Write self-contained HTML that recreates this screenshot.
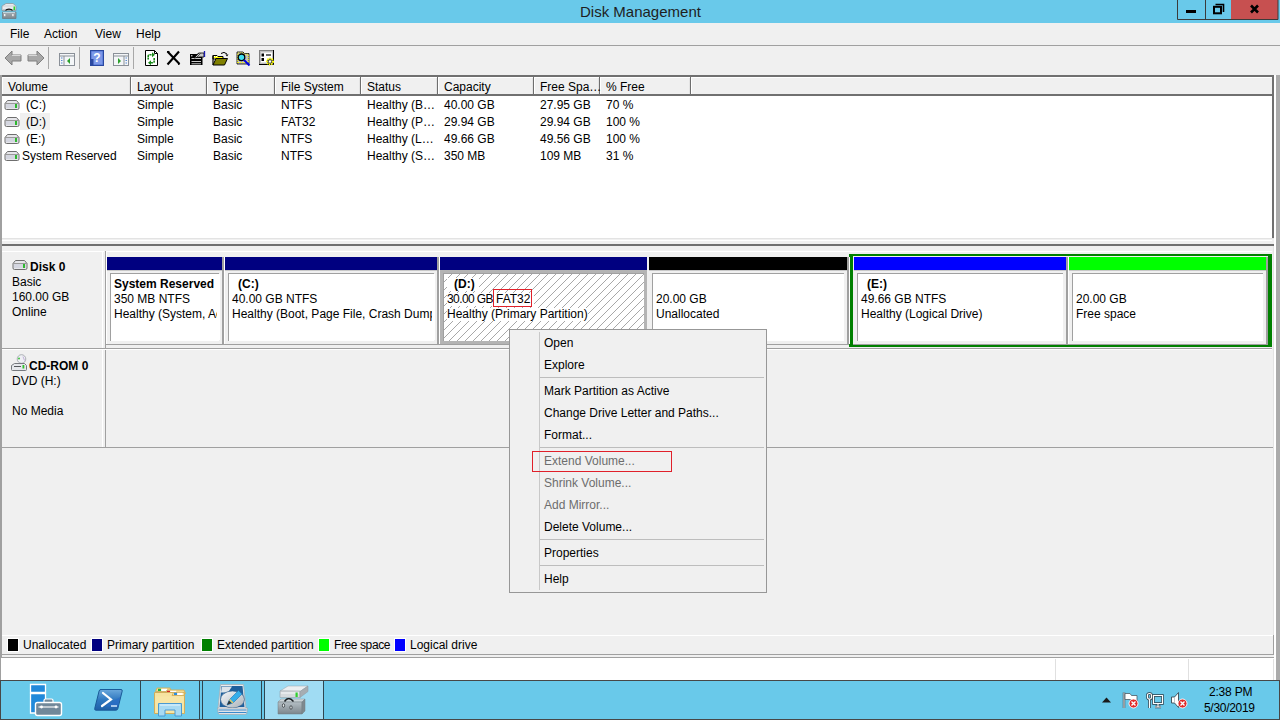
<!DOCTYPE html>
<html><head><meta charset="utf-8">
<style>
*{margin:0;padding:0;box-sizing:border-box}
html,body{width:1280px;height:720px;overflow:hidden;background:#F0F0F0;font-family:"Liberation Sans",sans-serif;font-size:12px;color:#000}
.a{position:absolute}
.t{position:absolute;white-space:nowrap;line-height:14px}
.b{font-weight:bold}
#title{left:0;top:0;width:1280px;height:23px;background:#69C9EA}
#menubar{left:0;top:23px;width:1280px;height:22px;background:#F0F0F0}
#tb{left:0;top:45px;width:1280px;height:30px;background:#F0F0F0;border-top:1px solid #A0A0A0}
.hdr{top:78px;height:16px;background:#F0F0F0}
.hsep{top:78px;width:2px;height:17px;border-left:1px solid #A0A0A0;border-right:1px solid #fff}
.blk{position:absolute;top:257px;height:87px;background:#F0F0F0}
.bar{position:absolute;left:0;top:0;right:0;height:13px}
.bsep{position:absolute;left:0;top:13px;right:0;height:1px;background:#C8C8C8}
.box{position:absolute;left:3px;top:16px;right:3px;height:68px;background:#fff;border-top:1px solid #A0A0A0;border-left:1px solid #A0A0A0}
.vs{position:absolute;top:257px;height:87px;width:3px;border-left:2px solid #A0A0A0;border-right:1px solid #fff}
.mi{position:absolute;left:544px;white-space:nowrap;line-height:14px}
.dis{color:#6D6D6D}
.msep{position:absolute;left:540px;width:224px;height:1px;background:#BDBDBD}
</style></head><body>

<!-- title bar -->
<div id="title" class="a"></div>
<div class="t" style="left:580px;top:3px;font-size:15px;line-height:17px;color:#1E1E1E">Disk Management</div>
<!-- window buttons -->
<div class="a" style="left:1231px;top:0;width:47px;height:19px;background:#C75050"></div>
<svg class="a" style="left:1177px;top:0" width="103" height="21" viewBox="0 0 103 21">
<path d="M0.5 0v19.5h100.5v-19.5M28.5 0v19.5" fill="none" stroke="#3B3B3B" stroke-width="1"/>
<rect x="9" y="10" width="10" height="3" fill="#000"/>
<path d="M38.5 4.5h8v7.5" fill="none" stroke="#000" stroke-width="1.6"/>
<rect x="37" y="6.8" width="7" height="6.5" fill="none" stroke="#000" stroke-width="2"/>
<path d="M74 5.5l7 7M81 5.5l-7 7" stroke="#000" stroke-width="2.6"/>
</svg>
<!-- menu -->
<div id="menubar" class="a"></div>
<div class="t" style="left:10px;top:27px">File</div>
<div class="t" style="left:44px;top:27px">Action</div>
<div class="t" style="left:95px;top:27px">View</div>
<div class="t" style="left:136px;top:27px">Help</div>

<!-- toolbar -->
<div id="tb" class="a"></div>

<!-- right gray strip -->
<div class="a" style="left:1276px;top:75px;width:4px;height:605px;background:#ABABAB"></div>
<!-- left border -->
<div class="a" style="left:0;top:75px;width:2px;height:605px;background:#A0A0A0"></div>

<!-- list view -->
<div class="a" style="left:2px;top:75px;width:1272px;height:2px;background:#707070"></div>
<div class="a" style="left:2px;top:77px;width:1272px;height:161px;background:#fff"></div>
<div class="a hdr" style="left:3px;width:1270px"></div>
<div class="a" style="left:2px;top:94px;width:1272px;height:2px;background:#707070"></div>
<div class="a" style="left:1272px;top:75px;width:2px;height:163px;background:#707070"></div>
<div class="a" style="left:2px;top:238px;width:1272px;height:1px;background:#E3E3E3"></div>
<div class="a" style="left:2px;top:244px;width:1272px;height:2px;background:#707070"></div>

<div class="a" style="left:2px;top:77px;width:1px;height:17px;background:#fff"></div>
<div class="a" style="left:131px;top:77px;width:1px;height:17px;background:#fff"></div>
<div class="a" style="left:207px;top:77px;width:1px;height:17px;background:#fff"></div>
<div class="a" style="left:275px;top:77px;width:1px;height:17px;background:#fff"></div>
<div class="a" style="left:361px;top:77px;width:1px;height:17px;background:#fff"></div>
<div class="a" style="left:438px;top:77px;width:1px;height:17px;background:#fff"></div>
<div class="a" style="left:534px;top:77px;width:1px;height:17px;background:#fff"></div>
<div class="a" style="left:600px;top:77px;width:1px;height:17px;background:#fff"></div>
<div class="a" style="left:691px;top:77px;width:1px;height:17px;background:#fff"></div>
<div class="a" style="left:129px;top:78px;width:1px;height:16px;background:#E3E3E3"></div>
<div class="a" style="left:130px;top:77px;width:1px;height:17px;background:#6E6E6E"></div>
<div class="a" style="left:205px;top:78px;width:1px;height:16px;background:#E3E3E3"></div>
<div class="a" style="left:206px;top:77px;width:1px;height:17px;background:#6E6E6E"></div>
<div class="a" style="left:273px;top:78px;width:1px;height:16px;background:#E3E3E3"></div>
<div class="a" style="left:274px;top:77px;width:1px;height:17px;background:#6E6E6E"></div>
<div class="a" style="left:359px;top:78px;width:1px;height:16px;background:#E3E3E3"></div>
<div class="a" style="left:360px;top:77px;width:1px;height:17px;background:#6E6E6E"></div>
<div class="a" style="left:436px;top:78px;width:1px;height:16px;background:#E3E3E3"></div>
<div class="a" style="left:437px;top:77px;width:1px;height:17px;background:#6E6E6E"></div>
<div class="a" style="left:532px;top:78px;width:1px;height:16px;background:#E3E3E3"></div>
<div class="a" style="left:533px;top:77px;width:1px;height:17px;background:#6E6E6E"></div>
<div class="a" style="left:598px;top:78px;width:1px;height:16px;background:#E3E3E3"></div>
<div class="a" style="left:599px;top:77px;width:1px;height:17px;background:#6E6E6E"></div>
<div class="a" style="left:689px;top:78px;width:1px;height:16px;background:#E3E3E3"></div>
<div class="a" style="left:690px;top:77px;width:1px;height:17px;background:#6E6E6E"></div>
<div class="t" style="left:8px;top:80px">Volume</div>
<div class="t" style="left:137px;top:80px">Layout</div>
<div class="t" style="left:213px;top:80px">Type</div>
<div class="t" style="left:281px;top:80px">File System</div>
<div class="t" style="left:367px;top:80px">Status</div>
<div class="t" style="left:444px;top:80px">Capacity</div>
<div class="t" style="left:540px;top:80px">Free Spa&hellip;</div>
<div class="t" style="left:606px;top:80px">% Free</div>
<svg class="a" style="left:4px;top:100px" width="16" height="10" viewBox="0 0 16 10"><path d="M3.5 0.5h9l2.5 3v4.5a1.5 1.5 0 0 1-1.5 1.5h-11a1.5 1.5 0 0 1-1.5-1.5v-4.5z" fill="#E6E6EA" stroke="#6E6E6E"/><path d="M1 3.5h14" stroke="#9A9A9A"/><rect x="2" y="4" width="12" height="4" fill="#D4D6E0"/><rect x="11" y="4" width="2" height="4" fill="#2EB82E"/></svg>
<div class="t" style="left:26px;top:98px">(C:)</div>
<div class="t" style="left:137px;top:98px">Simple</div>
<div class="t" style="left:213px;top:98px">Basic</div>
<div class="t" style="left:281px;top:98px">NTFS</div>
<div class="t" style="left:367px;top:98px">Healthy (B&hellip;</div>
<div class="t" style="left:444px;top:98px">40.00 GB</div>
<div class="t" style="left:540px;top:98px">27.95 GB</div>
<div class="t" style="left:606px;top:98px">70 %</div>
<svg class="a" style="left:4px;top:117px" width="16" height="10" viewBox="0 0 16 10"><path d="M3.5 0.5h9l2.5 3v4.5a1.5 1.5 0 0 1-1.5 1.5h-11a1.5 1.5 0 0 1-1.5-1.5v-4.5z" fill="#E6E6EA" stroke="#6E6E6E"/><path d="M1 3.5h14" stroke="#9A9A9A"/><rect x="2" y="4" width="12" height="4" fill="#D4D6E0"/><rect x="11" y="4" width="2" height="4" fill="#2EB82E"/></svg>
<div class="a" style="left:20px;top:113px;width:30px;height:17px;background:#F0F0F0"></div>
<div class="t" style="left:26px;top:115px">(D:)</div>
<div class="t" style="left:137px;top:115px">Simple</div>
<div class="t" style="left:213px;top:115px">Basic</div>
<div class="t" style="left:281px;top:115px">FAT32</div>
<div class="t" style="left:367px;top:115px">Healthy (P&hellip;</div>
<div class="t" style="left:444px;top:115px">29.94 GB</div>
<div class="t" style="left:540px;top:115px">29.94 GB</div>
<div class="t" style="left:606px;top:115px">100 %</div>
<svg class="a" style="left:4px;top:134px" width="16" height="10" viewBox="0 0 16 10"><path d="M3.5 0.5h9l2.5 3v4.5a1.5 1.5 0 0 1-1.5 1.5h-11a1.5 1.5 0 0 1-1.5-1.5v-4.5z" fill="#E6E6EA" stroke="#6E6E6E"/><path d="M1 3.5h14" stroke="#9A9A9A"/><rect x="2" y="4" width="12" height="4" fill="#D4D6E0"/><rect x="11" y="4" width="2" height="4" fill="#2EB82E"/></svg>
<div class="t" style="left:26px;top:132px">(E:)</div>
<div class="t" style="left:137px;top:132px">Simple</div>
<div class="t" style="left:213px;top:132px">Basic</div>
<div class="t" style="left:281px;top:132px">NTFS</div>
<div class="t" style="left:367px;top:132px">Healthy (L&hellip;</div>
<div class="t" style="left:444px;top:132px">49.66 GB</div>
<div class="t" style="left:540px;top:132px">49.56 GB</div>
<div class="t" style="left:606px;top:132px">100 %</div>
<svg class="a" style="left:4px;top:151px" width="16" height="10" viewBox="0 0 16 10"><path d="M3.5 0.5h9l2.5 3v4.5a1.5 1.5 0 0 1-1.5 1.5h-11a1.5 1.5 0 0 1-1.5-1.5v-4.5z" fill="#E6E6EA" stroke="#6E6E6E"/><path d="M1 3.5h14" stroke="#9A9A9A"/><rect x="2" y="4" width="12" height="4" fill="#D4D6E0"/><rect x="11" y="4" width="2" height="4" fill="#2EB82E"/></svg>
<div class="t" style="left:22px;top:149px">System Reserved</div>
<div class="t" style="left:137px;top:149px">Simple</div>
<div class="t" style="left:213px;top:149px">Basic</div>
<div class="t" style="left:281px;top:149px">NTFS</div>
<div class="t" style="left:367px;top:149px">Healthy (S&hellip;</div>
<div class="t" style="left:444px;top:149px">350 MB</div>
<div class="t" style="left:540px;top:149px">109 MB</div>
<div class="t" style="left:606px;top:149px">31 %</div>
<div class="a" style="left:2px;top:240px;width:1270px;height:1px;background:#fff"></div>
<div class="a" style="left:2px;top:251px;width:102px;height:1px;background:#fff"></div>
<div class="a" style="left:102px;top:252px;width:1px;height:96px;background:#fff"></div>
<div class="a" style="left:105px;top:251px;width:1px;height:197px;background:#A0A0A0"></div>
<div class="a" style="left:2px;top:348px;width:1270px;height:1px;background:#A0A0A0"></div>
<div class="a" style="left:2px;top:349px;width:1270px;height:1px;background:#fff"></div>
<div class="a" style="left:105px;top:344px;width:1167px;height:1px;background:#A0A0A0"></div>
<div class="a" style="left:106px;top:251px;width:1166px;height:1px;background:#fff"></div>
<div class="a" style="left:106px;top:252px;width:1px;height:92px;background:#fff"></div>
<div class="a" style="left:2px;top:447px;width:1272px;height:1px;background:#A0A0A0"></div>
<div class="a" style="left:102px;top:350px;width:1px;height:97px;background:#fff"></div>
<svg class="a" style="left:12px;top:260px" width="16" height="10" viewBox="0 0 16 10"><path d="M3.5 0.5h9l2.5 3v4.5a1.5 1.5 0 0 1-1.5 1.5h-11a1.5 1.5 0 0 1-1.5-1.5v-4.5z" fill="#E6E6EA" stroke="#6E6E6E"/><path d="M1 3.5h14" stroke="#9A9A9A"/><rect x="2" y="4" width="12" height="4" fill="#D4D6E0"/><rect x="11" y="4" width="2" height="4" fill="#2EB82E"/></svg>
<div class="t b" style="left:30px;top:260px">Disk 0</div>
<div class="t" style="left:12px;top:275px">Basic</div>
<div class="t" style="left:12px;top:290px">160.00 GB</div>
<div class="t" style="left:12px;top:305px">Online</div>
<svg class="a" style="left:11px;top:354px" width="17" height="17" viewBox="0 0 17 17"><circle cx="10.5" cy="5" r="4.3" fill="#EEF0F4" stroke="#9A9EA6" stroke-width="0.8"/><circle cx="8" cy="4.5" r="1" fill="#3EC23E"/><path d="M12 2.5l1.5 4" stroke="#B8A0D0" stroke-width="0.8"/><path d="M3.5 9.5h10l2 2v4a1 1 0 0 1-1 1h-13a1 1 0 0 1-1-1v-4z" fill="#E6E8EC" stroke="#76797E"/><path d="M3 12.5h7" stroke="#55585C" stroke-width="1"/><rect x="11.5" y="11" width="1.8" height="3.5" fill="#2EC22E"/></svg>
<div class="t b" style="left:29px;top:359px">CD-ROM 0</div>
<div class="t" style="left:12px;top:374px">DVD (H:)</div>
<div class="t" style="left:12px;top:404px">No Media</div>
<div class="a" style="left:107px;top:257px;width:115px;height:13px;background:#000080"></div>
<div class="a" style="left:107px;top:270px;width:115px;height:1px;background:#C8C8C8"></div>
<div class="a" style="left:110px;top:273px;width:109px;height:68px;background:#fff;border-top:1px solid #A0A0A0;border-left:1px solid #A0A0A0;overflow:hidden">
<div class="t b" style="left:3px;top:3px">System Reserved</div>
<div class="t" style="left:3px;top:18px">350 MB NTFS</div>
<div class="t" style="left:3px;top:33px">Healthy (System, Active, Primary Partition)</div>
</div>
<div class="a" style="left:225px;top:257px;width:212px;height:13px;background:#000080"></div>
<div class="a" style="left:225px;top:270px;width:212px;height:1px;background:#C8C8C8"></div>
<div class="a" style="left:228px;top:273px;width:206px;height:68px;background:#fff;border-top:1px solid #A0A0A0;border-left:1px solid #A0A0A0;overflow:hidden">
<div class="t b" style="left:9px;top:3px">(C:)</div>
<div class="t" style="left:3px;top:18px">40.00 GB NTFS</div>
<div class="t" style="left:3px;top:33px">Healthy (Boot, Page File, Crash Dump, Primary Partition)</div>
</div>
<div class="a" style="left:440px;top:257px;width:207px;height:13px;background:#000080"></div>
<div class="a" style="left:440px;top:270px;width:207px;height:1px;background:#C8C8C8"></div>
<div class="a" style="left:440px;top:270px;width:207px;height:74px;background:#B4B4B4"></div>
<div class="a" style="left:443px;top:273px;width:201px;height:68px;background:#fff;border-top:1px solid #A0A0A0;border-left:1px solid #A0A0A0;overflow:hidden"><svg class="a" style="left:0;top:0" width="210" height="70"><defs><pattern id="hp" patternUnits="userSpaceOnUse" width="8" height="8"><path d="M0 8L8 0M-1 1L1 -1M7 9L9 7" stroke="#A8A8A8" stroke-width="1"/></pattern></defs><rect width="210" height="70" fill="url(#hp)"/></svg>
<div class="t b" style="left:3px;top:4px;line-height:13px;padding:0 4px 0 7px;background:#fff">(D:)</div>
<div class="t" style="left:3px;top:19px;line-height:13px;width:87px;background:#fff"><span style="letter-spacing:-0.6px">30.00 GB</span></div><div class="t" style="left:52px;top:19px;line-height:13px">FAT32</div>
<div class="t" style="left:3px;top:34px;line-height:13px;background:#fff">Healthy (Primary Partition)</div>
</div>
<div class="a" style="left:649px;top:257px;width:198px;height:13px;background:#000000"></div>
<div class="a" style="left:649px;top:270px;width:198px;height:1px;background:#C8C8C8"></div>
<div class="a" style="left:652px;top:273px;width:192px;height:68px;background:#fff;border-top:1px solid #A0A0A0;border-left:1px solid #A0A0A0;overflow:hidden">
<div class="t" style="left:3px;top:18px">20.00 GB</div>
<div class="t" style="left:3px;top:33px">Unallocated</div>
</div>
<div class="a" style="left:849px;top:254px;width:423px;height:93px;border:4px solid #008000;border-top-width:2px;border-bottom-width:2px"></div>
<div class="a" style="left:854px;top:257px;width:212px;height:13px;background:#0000FF"></div>
<div class="a" style="left:854px;top:270px;width:212px;height:1px;background:#C8C8C8"></div>
<div class="a" style="left:857px;top:273px;width:206px;height:68px;background:#fff;border-top:1px solid #A0A0A0;border-left:1px solid #A0A0A0;overflow:hidden">
<div class="t b" style="left:9px;top:3px">(E:)</div>
<div class="t" style="left:3px;top:18px">49.66 GB NTFS</div>
<div class="t" style="left:3px;top:33px">Healthy (Logical Drive)</div>
</div>
<div class="a" style="left:1069px;top:257px;width:197px;height:13px;background:#00FF00"></div>
<div class="a" style="left:1069px;top:270px;width:197px;height:1px;background:#C8C8C8"></div>
<div class="a" style="left:1072px;top:273px;width:191px;height:68px;background:#fff;border-top:1px solid #A0A0A0;border-left:1px solid #A0A0A0;overflow:hidden">
<div class="t" style="left:3px;top:18px">20.00 GB</div>
<div class="t" style="left:3px;top:33px">Free space</div>
</div>
<div class="a" style="left:222px;top:257px;width:2px;height:87px;background:#A0A0A0"></div>
<div class="a" style="left:224px;top:257px;width:1px;height:87px;background:#fff"></div>
<div class="a" style="left:437px;top:257px;width:2px;height:87px;background:#A0A0A0"></div>
<div class="a" style="left:439px;top:257px;width:1px;height:87px;background:#fff"></div>
<div class="a" style="left:847px;top:257px;width:2px;height:87px;background:#A0A0A0"></div>
<div class="a" style="left:849px;top:257px;width:1px;height:87px;background:#fff"></div>
<div class="a" style="left:1066px;top:257px;width:2px;height:87px;background:#A0A0A0"></div>
<div class="a" style="left:1068px;top:257px;width:1px;height:87px;background:#fff"></div>
<div class="a" style="left:1266px;top:257px;width:2px;height:88px;background:#A0A0A0"></div>
<div class="a" style="left:217px;top:274px;width:3px;height:66px;background:#fff"></div>
<div class="a" style="left:432px;top:274px;width:3px;height:66px;background:#fff"></div>
<div class="a" style="left:493px;top:289px;width:39px;height:18px;border:1px solid #E0202A"></div>
<div class="a" style="left:2px;top:635px;width:1271px;height:1px;background:#fff"></div>
<div class="a" style="left:2px;top:654px;width:1272px;height:1px;background:#A0A0A0"></div>
<div class="a" style="left:1273px;top:635px;width:1px;height:20px;background:#A0A0A0"></div>
<div class="a" style="left:7px;top:638px;width:12px;height:14px;background:#000000;border:1px solid #fff"></div>
<div class="t" style="left:23px;top:638px">Unallocated</div>
<div class="a" style="left:91px;top:638px;width:12px;height:14px;background:#000080;border:1px solid #fff"></div>
<div class="t" style="left:107px;top:638px">Primary partition</div>
<div class="a" style="left:201px;top:638px;width:12px;height:14px;background:#008000;border:1px solid #fff"></div>
<div class="t" style="left:217px;top:638px">Extended partition</div>
<div class="a" style="left:318px;top:638px;width:12px;height:14px;background:#00FF00;border:1px solid #fff"></div>
<div class="t" style="left:334px;top:638px;letter-spacing:-0.4px">Free space</div>
<div class="a" style="left:394px;top:638px;width:12px;height:14px;background:#0000FF;border:1px solid #fff"></div>
<div class="t" style="left:410px;top:638px">Logical drive</div>
<div class="a" style="left:0px;top:657px;width:1274px;height:1px;background:#A0A0A0"></div><div class="a" style="left:1274px;top:75px;width:2px;height:605px;background:#fff"></div><div class="a" style="left:1273px;top:246px;width:1px;height:389px;background:#E3E3E3"></div>
<div class="a" style="left:1px;top:658px;width:1273px;height:22px;background:#fff"></div>
<div class="a" style="left:1055px;top:659px;width:1px;height:21px;background:#E0E0E0"></div>
<div class="a" style="left:1188px;top:659px;width:1px;height:21px;background:#E0E0E0"></div>
<div class="a" style="left:1273px;top:659px;width:1px;height:21px;background:#E0E0E0"></div>
<div class="a" style="left:509px;top:329px;width:258px;height:264px;background:#F0F0F0;border:1px solid #979797"></div>
<div class="a" style="left:539px;top:332px;width:1px;height:258px;background:#C8C8C8"></div>
<div class="mi" style="top:336px">Open</div>
<div class="mi" style="top:358px">Explore</div>
<div class="mi" style="top:384px">Mark Partition as Active</div>
<div class="mi" style="top:406px">Change Drive Letter and Paths...</div>
<div class="mi" style="top:428px">Format...</div>
<div class="mi dis" style="top:454px">Extend Volume...</div>
<div class="mi dis" style="top:476px">Shrink Volume...</div>
<div class="mi dis" style="top:498px">Add Mirror...</div>
<div class="mi" style="top:520px">Delete Volume...</div>
<div class="mi" style="top:546px">Properties</div>
<div class="mi" style="top:572px">Help</div>
<div class="msep" style="top:377px"></div>
<div class="msep" style="top:447px"></div>
<div class="msep" style="top:539px"></div>
<div class="msep" style="top:565px"></div>
<div class="a" style="left:532px;top:451px;width:140px;height:21px;border:1px solid #E0202A"></div>
<!-- taskbar -->
<div class="a" style="left:0;top:680px;width:1280px;height:40px;background:#69C9EA;border-top:1px solid #474747;border-bottom:1px solid #474747"></div>
<div class="a" style="left:0;top:680px;width:1px;height:40px;background:#474747"></div>
<div class="a" style="left:1279px;top:680px;width:1px;height:40px;background:#474747"></div>
<div class="a" style="left:140px;top:681px;width:60px;height:38px;background:#6DCBEC;border-left:1px solid #2E4650;border-right:1px solid #2E4650"></div>
<div class="a" style="left:202px;top:681px;width:60px;height:38px;background:#6DCBEC;border-left:1px solid #2E4650;border-right:1px solid #2E4650"></div>
<div class="a" style="left:264px;top:681px;width:60px;height:38px;background:#A0DCF3;border-left:1px solid #2E4650;border-right:1px solid #2E4650"></div>
<svg class="a" style="left:29px;top:683px" width="35" height="35" viewBox="0 0 35 35">
<path d="M1.5 1.5h15v8h-15z" fill="#2189DA" stroke="#fff" stroke-width="1.3"/>
<path d="M1.5 10.5h15v19.5h-15z" fill="#2189DA" stroke="#fff" stroke-width="1.3"/>
<path d="M15 19.5v-2a1.5 1.5 0 0 1 1.5-1.5h6a1.5 1.5 0 0 1 1.5 1.5v2" fill="#71889A" stroke="#fff" stroke-width="1.2"/>
<rect x="6.5" y="19.5" width="26" height="13" rx="2" fill="#71889A" stroke="#fff" stroke-width="1.4"/>
<path d="M9.5 24h20" stroke="#fff" stroke-width="1.1"/><circle cx="12.5" cy="24" r="1.4" fill="#fff"/><circle cx="27" cy="24" r="1.4" fill="#fff"/>
</svg>
<svg class="a" style="left:94px;top:688px" width="30" height="24" viewBox="0 0 30 24">
<defs><linearGradient id="psg" x1="0" y1="0" x2="0" y2="1"><stop offset="0" stop-color="#6AA8DC"/><stop offset="0.5" stop-color="#2F78C0"/><stop offset="1" stop-color="#1F5FA8"/></linearGradient></defs>
<path d="M6.5 1.5h20.5a1.3 1.3 0 0 1 1.2 1.6l-4.4 17.6a2 2 0 0 1-1.9 1.5h-20a1.3 1.3 0 0 1-1.2-1.6l4.4-17.6a2 2 0 0 1 1.9-1.5z" fill="url(#psg)" stroke="#1A5A98" stroke-width="1"/>
<path d="M21 12l5-3-1.7 9.5h-13z" fill="#2A6CC8" opacity="0.7"/>
<path d="M9 5l8 6.5-9 6.5" stroke="#fff" stroke-width="2.2" fill="none" stroke-linecap="round"/><path d="M17 18h6" stroke="#A8C8EC" stroke-width="2"/>
</svg>
<svg class="a" style="left:153px;top:686px" width="34" height="31" viewBox="0 0 34 31">
<path d="M2.5 5.5l1.5-3.5h13l1.5 3.5z" fill="#F3DC92" stroke="#D2AE5C" stroke-width="0.9"/>
<rect x="5" y="2.8" width="3.2" height="2.2" fill="#22B53C"/><rect x="8.2" y="2.8" width="6" height="2.2" fill="#fff"/>
<path d="M12.5 7.5l1.5-3.5h17l1.5 3.5z" fill="#F3DC92" stroke="#D2AE5C" stroke-width="0.9"/>
<rect x="14" y="4.8" width="3.2" height="2.2" fill="#D42525"/><rect x="17.2" y="4.8" width="6" height="2.2" fill="#fff"/>
<path d="M1.5 6.5h30v21h-30z" fill="#F6E3A0" stroke="#D2AE5C"/>
<path d="M19 9.5l1.5-3h11v3z" fill="#F3DC92" stroke="#D2AE5C" stroke-width="0.9"/>
<rect x="21" y="6.8" width="3.2" height="2.2" fill="#2A8DE0"/><rect x="24.2" y="6.8" width="5.5" height="2.2" fill="#fff"/>
<path d="M2.5 10.5h28v16h-28z" fill="#F8E6A6"/>
<path d="M5.5 17.5h23v12.5h-6.5v-6h-10v6h-6.5z" fill="#A8DAF2" stroke="#4A9AD2" stroke-width="1"/>
<path d="M7 19h20" stroke="#E6F6FF" stroke-width="1"/>
</svg>
<svg class="a" style="left:216px;top:683px" width="33" height="33" viewBox="0 0 33 33">
<defs><linearGradient id="dkg" x1="0" y1="0" x2="1" y2="1"><stop offset="0" stop-color="#F6F8FA"/><stop offset="1" stop-color="#A8B0B8"/></linearGradient></defs>
<path d="M4.5 1.5h23l2.5 24h-28z" fill="#E8ECEF" stroke="#A8B0B6" stroke-width="0.8"/>
<path d="M5.5 3h21l2 21h-25z" fill="#1F609C"/>
<path d="M6 3.5h10l-4 6h-7z" fill="#DCE4EA"/>
<ellipse cx="16.5" cy="16.5" rx="12" ry="8.5" fill="url(#dkg)" stroke="#1A4E80" stroke-width="0.6"/>
<path d="M11 22l2.5-5.5 9-9 3.5 3.5-9 9z" fill="#35AEEA" stroke="#1C70B0" stroke-width="0.6"/>
<path d="M13.5 16.5l3.5 3.5" stroke="#E8C860" stroke-width="1.5"/>
<path d="M11 22l2-4.5 2.5 2.5z" fill="#333"/>
<path d="M1.5 25h30l-0.5 4.5a2 2 0 0 1-2 2h-25a2 2 0 0 1-2-2z" fill="#E0E4E8" stroke="#9AA2AA" stroke-width="0.6"/>
<path d="M2.5 27h28M2.5 29.5h28" stroke="#3A8ACC" stroke-width="1"/>
</svg>
<svg class="a" style="left:277px;top:684px" width="34" height="32" viewBox="0 0 34 32">
<defs><linearGradient id="dmg" x1="0" y1="0" x2="0" y2="1"><stop offset="0" stop-color="#B4BEC4"/><stop offset="1" stop-color="#7C868C"/></linearGradient></defs>
<path d="M1 18l3-3h24l-3 3z" fill="#CBD3D7" stroke="#8A949A" stroke-width="0.5"/>
<path d="M1 18h24v12h-24z" fill="url(#dmg)" stroke="#737D83" stroke-width="0.5"/>
<path d="M25 18l3-3v12l-3 3z" fill="#7F898F" stroke="#737D83" stroke-width="0.5"/>
<ellipse cx="6.5" cy="21.5" rx="1.1" ry="1.8" fill="#E8ECEE" stroke="#30363A" stroke-width="0.8"/>
<ellipse cx="14" cy="23.5" rx="1.1" ry="1.8" fill="#E8ECEE" stroke="#30363A" stroke-width="0.8"/>
<path d="M7.5 17.5q4-6 9 0" stroke="#1A1E22" stroke-width="1.4" fill="none"/>
<path d="M3 7l8-5h20l-8 5.5z" fill="#ECEFF1" stroke="#9AA2A8" stroke-width="0.5"/>
<path d="M3 7h20v6.5h-20z" fill="#D6DADD" stroke="#8E969C" stroke-width="0.5"/>
<path d="M23 7.5l8-5.5v5.5l-8 6z" fill="#A6ADB2" stroke="#8E969C" stroke-width="0.5"/>
<path d="M4 9h18" stroke="#F6F8FA" stroke-width="1"/>
<rect x="18.5" y="8.5" width="2.2" height="4.5" fill="#2ED12E"/>
</svg>
<svg class="a" style="left:1102px;top:697px" width="9" height="6" viewBox="0 0 9 6"><path d="M0 5.5L4.5 0.5L9 5.5z" fill="#1A1A1A"/></svg>
<svg class="a" style="left:1122px;top:691px" width="18" height="18" viewBox="0 0 18 18">
<path d="M2 1.5v15.5" stroke="#2B3D48" stroke-width="2.4"/><path d="M2 1.5v15.5" stroke="#fff" stroke-width="1"/>
<path d="M3 2.5h5l1.5 2h5.5v6h-5l-1.5-2h-5.5z" fill="#fff" stroke="#4A5A64" stroke-width="0.8"/>
<circle cx="11.5" cy="12.5" r="4.5" fill="#E12A2A" stroke="#fff" stroke-width="0.9"/>
<path d="M9.5 10.5l4 4M13.5 10.5l-4 4" stroke="#fff" stroke-width="1.4"/>
</svg>
<svg class="a" style="left:1146px;top:692px" width="18" height="17" viewBox="0 0 18 17">
<g fill="none" stroke="#2B3D48" stroke-width="2.6"><rect x="1.5" y="1.5" width="4" height="5.5" rx="1.8"/><path d="M3.5 7v9"/><path d="M7.5 3.5h9v8h-9zM12 11.5v3M9 15h6"/></g>
<g fill="none" stroke="#fff" stroke-width="1.2"><rect x="1.5" y="1.5" width="4" height="5.5" rx="1.8"/><path d="M3.5 7v9"/><path d="M7.5 3.5h9v8h-9zM12 11.5v3M9 15h6"/></g>
</svg>
<svg class="a" style="left:1170px;top:691px" width="18" height="18" viewBox="0 0 18 18">
<path d="M1.5 6h3l4-4.5v15l-4-4.5h-3z" fill="#fff" stroke="#3A4A54" stroke-width="0.9"/>
<path d="M4.5 6v6" stroke="#B0B8BE" stroke-width="0.8"/>
<circle cx="12.5" cy="12.5" r="4.5" fill="#E12A2A" stroke="#fff" stroke-width="0.9"/>
<path d="M10.5 10.5l4 4M14.5 10.5l-4 4" stroke="#fff" stroke-width="1.4"/>
</svg>
<div class="t" style="left:1209px;top:685px;font-size:12px;color:#000;letter-spacing:-0.2px">2:38 PM</div>
<div class="t" style="left:1204px;top:701px;font-size:12px;color:#000;letter-spacing:-0.3px">5/30/2019</div>
<svg class="a" style="left:0px;top:0px" width="20" height="22" viewBox="0 0 20 22">
<defs><linearGradient id="tig" x1="0" y1="0" x2="0" y2="1"><stop offset="0" stop-color="#A8B0B6"/><stop offset="1" stop-color="#7C868C"/></linearGradient></defs>
<path d="M2.5 12h13.5v6.5h-13.5z" fill="url(#tig)" stroke="#6E767C" stroke-width="0.7"/>
<path d="M3 12.5h12" stroke="#C8E4F0" stroke-width="0.8"/>
<rect x="4" y="14" width="1.4" height="2.2" fill="#F4F4F4"/><rect x="12.2" y="14" width="1.4" height="2.2" fill="#F4F4F4"/>
<path d="M6 3.5h7l3 2.5v4.5h-14v-4.5z" fill="#E8EAEE" stroke="#8A9096" stroke-width="0.7"/>
<path d="M2.5 6h14" stroke="#BFC4C8" stroke-width="0.6"/>
<path d="M3 10.5q-0.5-0.6 0-1h12.5q0.5 0.4 0 1z" fill="#A0A6AA"/>
<path d="M5.5 10.5a3.8 2.2 0 0 1 7 0" stroke="#111" stroke-width="1.2" fill="none"/>
<rect x="13.5" y="6.5" width="1.6" height="3.5" fill="#2FD62F"/>
</svg>
<svg class="a" style="left:4px;top:50px" width="18" height="16" viewBox="0 0 18 16"><path d="M1 8l7-7v4h9v6h-9v4z" fill="#A8A8A8" stroke="#808080"/><path d="M8 5.5h8.5" stroke="#D8D8D8"/></svg>
<svg class="a" style="left:27px;top:50px" width="18" height="16" viewBox="0 0 18 16"><path d="M17 8l-7-7v4h-9v6h9v4z" fill="#A8A8A8" stroke="#808080"/><path d="M1.5 5.5h8.5" stroke="#D8D8D8"/></svg>
<div class="a" style="left:48px;top:47px;width:1px;height:22px;background:#A8A8A8"></div>
<div class="a" style="left:79px;top:47px;width:1px;height:22px;background:#A8A8A8"></div>
<div class="a" style="left:133px;top:47px;width:1px;height:22px;background:#A8A8A8"></div>
<svg class="a" style="left:58px;top:52px" width="18" height="15" viewBox="0 0 18 15"><rect x="1.5" y="1.5" width="15" height="12" fill="#F4F6F8" stroke="#8A9098"/><path d="M1.5 4h15" stroke="#8A9098"/><path d="M6 4v9.5" stroke="#8A9098"/><path d="M3 6h1.5M3 8.5h1.5M3 11h1.5" stroke="#5A8AD0"/><path d="M12 6l-3 3 3 3z" fill="#2CA02C"/></svg>
<svg class="a" style="left:90px;top:50px" width="14" height="16" viewBox="0 0 14 16"><rect x="0.5" y="0.5" width="13" height="15" fill="#4A6FD0" stroke="#2A48A0"/><rect x="1.5" y="1.5" width="11" height="13" fill="#7C98E8"/><path d="M0.5 9h3v6.5h-3z" fill="#2A48A0"/><text x="7" y="12" font-family="Liberation Sans" font-size="12" font-weight="bold" fill="#fff" text-anchor="middle">?</text></svg>
<svg class="a" style="left:112px;top:52px" width="18" height="15" viewBox="0 0 18 15"><rect x="1.5" y="1.5" width="15" height="12" fill="#F4F6F8" stroke="#8A9098"/><path d="M1.5 4h15" stroke="#8A9098"/><path d="M12 4v9.5" stroke="#8A9098"/><path d="M13.5 6h1.5M13.5 8.5h1.5M13.5 11h1.5" stroke="#5A8AD0"/><path d="M6 6l3 3-3 3z" fill="#2CA02C"/></svg>
<svg class="a" style="left:144px;top:49px" width="15" height="18" viewBox="0 0 15 18"><path d="M1.5 1.5h9l3 3v12h-12z" fill="#fff" stroke="#000"/><path d="M10.5 1.5v3h3" fill="none" stroke="#000"/>
<path d="M4.2 10.5V7.3q0-1.6 1.6-1.6H8" stroke="#1A8A1A" stroke-width="1.6" fill="none" stroke-dasharray="2 0.6"/><path d="M8 3.2l3 2.5-3 2.5z" fill="#1A8A1A"/>
<path d="M10.2 9v3.2q0 1.6-1.6 1.6H7" stroke="#1A8A1A" stroke-width="1.6" fill="none" stroke-dasharray="2 0.6"/><path d="M7 11.3l-3 2.5 3 2.5z" fill="#1A8A1A"/></svg>
<svg class="a" style="left:166px;top:50px" width="15" height="16" viewBox="0 0 15 16"><path d="M1.5 1.5l12 12.5M13 1.5l-11.5 13" stroke="#000" stroke-width="2.1"/><path d="M1 1.5l2.5 0.2M12 14.5l1.8-0.5" stroke="#000" stroke-width="1"/></svg>
<svg class="a" style="left:189px;top:50px" width="17" height="16" viewBox="0 0 17 16"><rect x="1" y="4" width="12.5" height="11" fill="#000"/><path d="M2.5 8.5h9.5M2.5 11.5h9.5M2.5 13.8h9.5" stroke="#E0E0E0" stroke-width="0.9"/><circle cx="2.8" cy="5.8" r="0.7" fill="#fff"/>
<path d="M5 8l4.5-5h5.5v4h-4.5z" fill="#C8C8C8" stroke="#000" stroke-width="0.8"/><path d="M6 7l4-4M7.5 7.5l4-4" stroke="#000" stroke-width="0.6"/><path d="M15.5 1v6" stroke="#1A1AB0" stroke-width="1.3"/></svg>
<svg class="a" style="left:212px;top:50px" width="17" height="16" viewBox="0 0 17 16">
<defs><pattern id="ydot" patternUnits="userSpaceOnUse" width="2" height="2"><rect width="2" height="2" fill="#FFFF00"/><rect width="1" height="1" fill="#fff"/></pattern></defs>
<path d="M1 5.5h4l1 1h5v2.5h-10z" fill="url(#ydot)" stroke="#000" stroke-width="1"/>
<path d="M1 15l3-6.5h11.5l-3 6.5z" fill="#808000" stroke="#000" stroke-width="1"/>
<path d="M1 5.5v9.5" stroke="#000" stroke-width="1.2"/>
<path d="M9 3.5q3-2.5 6 0.5" stroke="#000" stroke-width="1" fill="none"/><path d="M13.5 4.5h3l-1.5 2z" fill="#000"/>
</svg>
<svg class="a" style="left:235px;top:50px" width="17" height="17" viewBox="0 0 17 17">
<path d="M2 2h6l1.5 1.5h4.5v10.5h-12z" fill="#C0C0C0" stroke="#000" stroke-width="0.8"/>
<path d="M2.8 3h5l1.3 1.3h4" stroke="#FFFF00" stroke-width="1.1" stroke-dasharray="1 1" fill="none"/>
<path d="M2.8 4v9M13.2 5v8M3 12.5h10" stroke="#FFFF00" stroke-width="1" stroke-dasharray="1 1"/>
<circle cx="6.5" cy="7.3" r="3.3" fill="#40E0F0" stroke="#000" stroke-width="1.3"/>
<path d="M9 10l5.5 5.5" stroke="#0000E0" stroke-width="2"/>
</svg>
<svg class="a" style="left:258px;top:49px" width="18" height="18" viewBox="0 0 18 18">
<rect x="1" y="1" width="14.5" height="14.5" fill="#C0C0C0"/><rect x="1.5" y="1.5" width="14" height="14" fill="none" stroke="#808080" stroke-width="1"/>
<path d="M1 15.5h14.5V1" stroke="#000" stroke-width="1" fill="none"/>
<rect x="3" y="3.5" width="11" height="10" fill="#fff"/>
<rect x="3.5" y="4.5" width="2.5" height="3" fill="#000"/><path d="M8 6h5" stroke="#000" stroke-width="1.2"/>
<rect x="3.5" y="9" width="2.5" height="3" fill="#000"/>
<circle cx="12" cy="12.5" r="3" fill="#404040" stroke="#FFFF00" stroke-width="2" stroke-dasharray="1.3 0.9"/><circle cx="12" cy="12.5" r="1.2" fill="#fff"/>
</svg>
</body></html>
